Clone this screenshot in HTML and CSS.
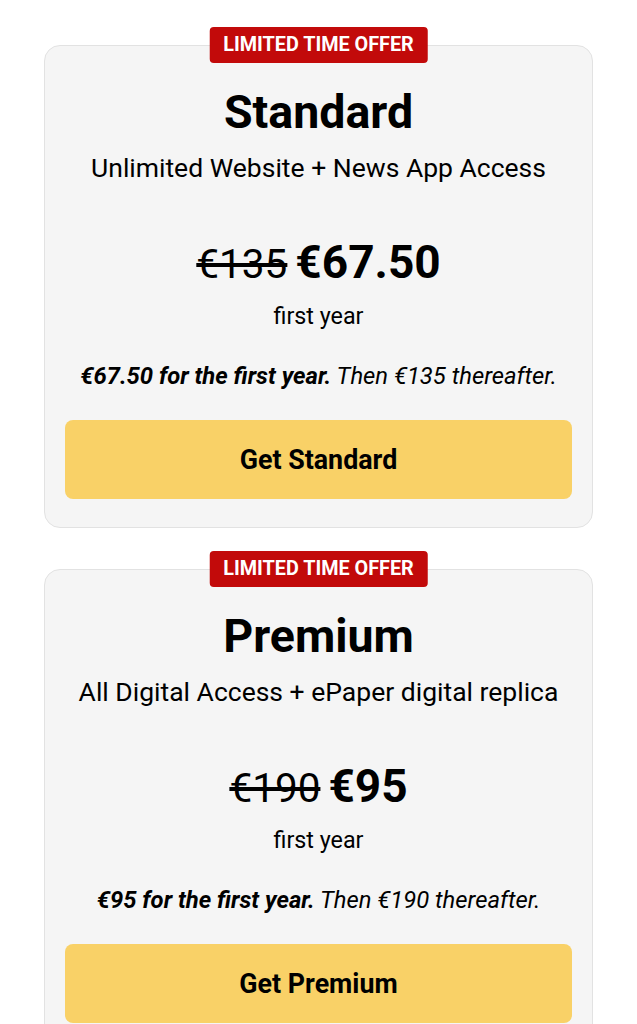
FILE: index.html
```html
<!DOCTYPE html>
<html lang="en">
<head>
<meta charset="utf-8">
<title>Plans</title>
<link rel="stylesheet" href="styles.css">
</head>
<body>
<main class="plans">
  <section class="card">
    <span class="badge">LIMITED TIME OFFER</span>
    <h2 class="title">Standard</h2>
    <p class="subtitle">Unlimited Website + News App Access</p>
    <div class="price"><s class="old">€135</s><span class="new">€67.50</span></div>
    <p class="period">first year</p>
    <p class="terms"><b>€67.50 for the first year.</b> Then €135 thereafter.</p>
    <button class="cta">Get Standard</button>
  </section>
  <section class="card">
    <span class="badge">LIMITED TIME OFFER</span>
    <h2 class="title">Premium</h2>
    <p class="subtitle">All Digital Access + ePaper digital replica</p>
    <div class="price"><s class="old">€190</s><span class="new">€95</span></div>
    <p class="period">first year</p>
    <p class="terms"><b>€95 for the first year.</b> Then €190 thereafter.</p>
    <button class="cta">Get Premium</button>
  </section>
</main>
</body>
</html>
```

FILE: styles.css
```css
html, body {
  margin: 0;
  padding: 0;
  background: #ffffff;
}
body {
  font-family: Roboto, "Liberation Sans", sans-serif;
  color: #000;
}
.plans {
  display: flex;
  flex-direction: column;
  gap: 41px;
  padding: 45px 44px 40px;
}
.card {
  position: relative;
  background: #f5f5f5;
  border: 1px solid #e2e2e2;
  border-radius: 16px;
  padding: 41px 20px 28px;
  text-align: center;
  display: flex;
  flex-direction: column;
  align-items: center;
}
.badge {
  position: absolute;
  top: -19px;
  left: 50%;
  transform: translateX(-50%);
  background: #c20a0a;
  color: #fff;
  font-weight: 700;
  font-size: 19.8px;
  line-height: 36px;
  height: 36px;
  padding: 0 14px;
  border-radius: 4px;
  white-space: nowrap;
}
.title {
  margin: 0;
  font-size: 46.5px;
  line-height: 50px;
  font-weight: 700;
}
.subtitle {
  margin: 15px 0 0;
  font-size: 26.5px;
  line-height: 32px;
}
.price {
  margin-top: 50px;
  display: flex;
  align-items: baseline;
  gap: 8px;
  line-height: 56px;
}
.old {
  font-size: 40.5px;
  font-weight: 400;
}
.new {
  font-size: 46px;
  font-weight: 700;
}
.period {
  margin: 10px 0 0;
  font-size: 23.3px;
  line-height: 28px;
}
.terms {
  margin: 32px 0 0;
  font-size: 23.8px;
  line-height: 28px;
  font-style: italic;
}
.cta {
  margin-top: 30px;
  width: 100%;
  height: 79px;
  border: 0;
  border-radius: 8px;
  background: #f9d167;
  font-family: inherit;
  font-size: 26.8px;
  font-weight: 700;
  color: #000;
}
```
